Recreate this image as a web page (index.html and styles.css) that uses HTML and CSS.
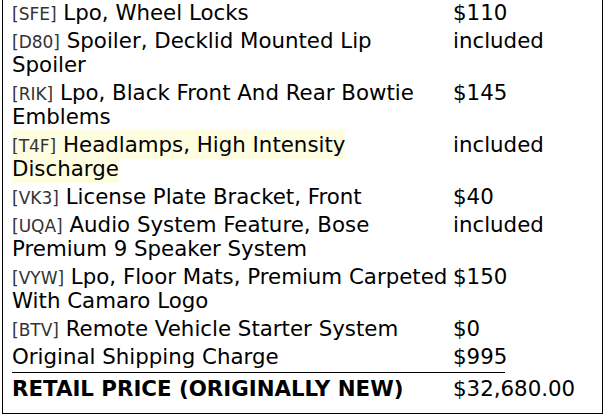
FILE: index.html
```html
<!DOCTYPE html>
<html>
<head>
<meta charset="utf-8">
<link rel="stylesheet" href="styles.css">
</head>
<body>
<div class="sheet">
  <div class="row"><div class="desc"><span class="code">[SFE]</span> Lpo, Wheel Locks</div><div class="price">$110</div></div>
  <div class="row"><div class="desc"><span class="code">[D80]</span> Spoiler, Decklid Mounted Lip Spoiler</div><div class="price">included</div></div>
  <div class="row"><div class="desc"><span class="code">[RIK]</span> Lpo, Black Front And Rear Bowtie Emblems</div><div class="price">$145</div></div>
  <div class="row"><div class="desc"><span class="hl"><span class="code">[T4F]</span> Headlamps, High Intensity Discharge</span></div><div class="price">included</div></div>
  <div class="row"><div class="desc"><span class="code">[VK3]</span> License Plate Bracket, Front</div><div class="price">$40</div></div>
  <div class="row"><div class="desc"><span class="code">[UQA]</span> Audio System Feature, Bose Premium 9 Speaker System</div><div class="price">included</div></div>
  <div class="row"><div class="desc"><span class="code">[VYW]</span> Lpo, Floor Mats, Premium Carpeted With Camaro Logo</div><div class="price">$150</div></div>
  <div class="row"><div class="desc"><span class="code">[BTV]</span> Remote Vehicle Starter System</div><div class="price">$0</div></div>
  <div class="row"><div class="desc">Original Shipping Charge</div><div class="price">$995</div></div>
  <div class="rule"></div>
  <div class="row total"><div class="desc">RETAIL PRICE (ORIGINALLY NEW)</div><div class="price">$32,680.00</div></div>
</div>
</body>
</html>
```
FILE: styles.css
```css
html, body {
  margin: 0;
  padding: 0;
  background: #fff;
}
body {
  font-family: "DejaVu Sans", sans-serif;
  font-size: 21.33px;
  line-height: 24px;
  color: #000;
}
.sheet {
  width: 601px;
  margin: -1px 0 0 2px;
  border: 1px solid #000;
  border-top: 0;
  padding: 0 0 0 9px;
  box-sizing: border-box;
}
.row {
  display: flex;
  padding: 2px 0;
}
.desc {
  width: 441px;
  padding-right: 4px;
  box-sizing: border-box;
  flex: none;
}
.price {
  white-space: nowrap;
}
.code {
  font-size: 17px;
  line-height: 1;
  color: #333;
}
.hl {
  background: #fefde0;
  padding: 2px 0;
}
.rule {
  width: 493px;
  border-top: 1px solid #000;
  margin: 1px 0 2px 0;
}
.total {
  padding-bottom: 12px;
}
.total .desc {
  font-weight: bold;
}
```
